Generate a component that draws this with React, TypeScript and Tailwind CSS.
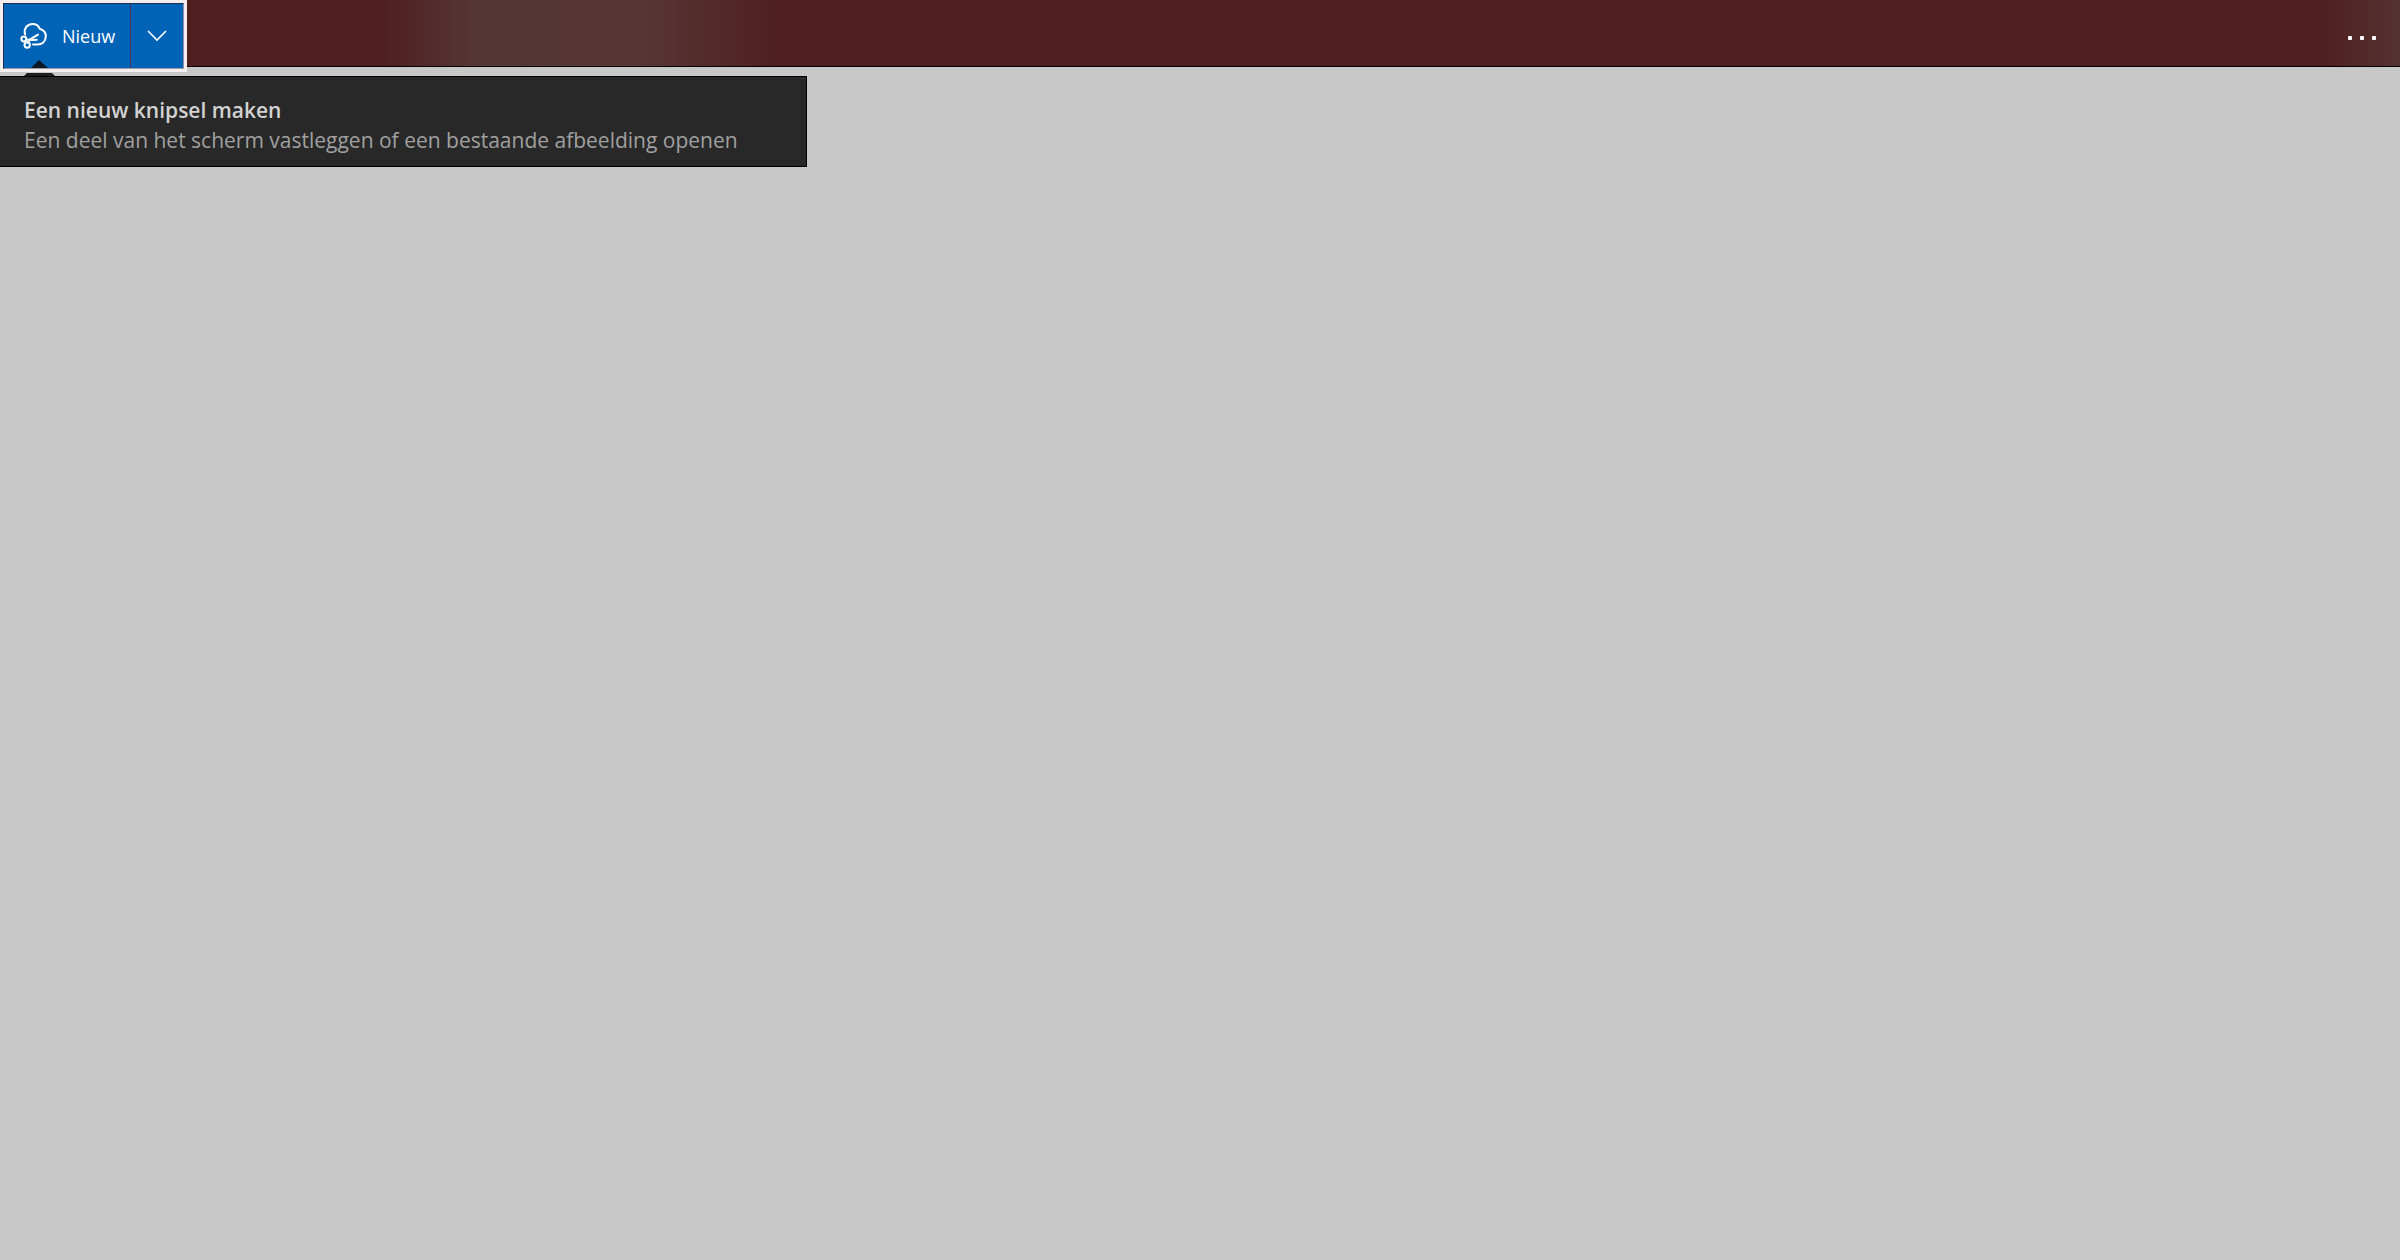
import React, { useState } from 'react';

const SnipIcon: React.FC = () => (
    <svg
        className="h-7 w-7 shrink-0"
        viewBox="0 0 28 28"
        fill="none"
        stroke="currentColor"
        strokeWidth="2"
        strokeLinecap="round"
        strokeLinejoin="round"
        aria-hidden="true"
    >
        <path d="M5.2 12.5C3.2 7 7.2 2 12.5 2C16.2 2 18.6 3.8 19.6 6.8C23.4 8 26 10.8 25.8 14.6C25.4 19.6 22 22.5 17.5 22.5H13" />
        <circle cx="3.8" cy="17" r="2.4" />
        <circle cx="7.2" cy="23" r="2.7" />
        <path d="M6 17.4L11.2 18L16.8 17.8" />
        <path d="M7.8 20.4L10 17.4L18 12.6" />
    </svg>
);

const ChevronIcon: React.FC = () => (
    <svg
        className="h-3 w-5"
        viewBox="0 0 20 12"
        fill="none"
        stroke="currentColor"
        strokeWidth="1.6"
        aria-hidden="true"
    >
        <path d="M1 1L10 10L19 1" />
    </svg>
);

const MoreIcon: React.FC = () => (
    <svg className="h-1 w-7" viewBox="0 0 28 4" fill="currentColor" aria-hidden="true">
        <rect width="4" height="4" rx="1" />
        <rect x="12" width="4" height="4" rx="1" />
        <rect x="24" width="4" height="4" rx="1" />
    </svg>
);

const App: React.FC = () => {
    const [menuOpen, setMenuOpen] = useState(false);

    return (
        <div className="min-h-screen bg-[#c8c8c8] font-['Open_Sans','Noto_Sans',sans-serif]">
            {/* Toolbar */}
            <header className="relative flex h-[67px] items-start justify-between border-b border-black bg-[#4f1f1f]">
                {/* Light showing through the title bar */}
                <div className="absolute inset-y-0 left-[380px] w-[400px] bg-[linear-gradient(to_right,transparent,#553738_25%,#573636_65%,transparent)]" />
                <div className="absolute inset-y-0 right-0 w-20 bg-linear-to-r from-transparent to-[#553232]" />

                {/* Split button */}
                <div className="relative">
                    <div className="border-3 border-[#f4eeee]">
                        <div className="flex h-[66px] border border-t-[#1b2f55] border-r-[#8f8fa8] border-b-[#9c9aa6] border-l-[#1b2f55] bg-[#0063b6] text-white">
                            <button
                                aria-describedby="new-snip-tip"
                                className="flex w-[127px] items-center gap-[14px] border-r border-[#552f58] pl-4 text-lg"
                            >
                                <SnipIcon />
                                Nieuw
                            </button>
                            <button
                                aria-label="Meer opties voor nieuw knipsel"
                                aria-expanded={menuOpen}
                                onClick={() => setMenuOpen(!menuOpen)}
                                className="flex w-[52px] items-center justify-center"
                            >
                                <ChevronIcon />
                            </button>
                        </div>
                    </div>

                    {/* Tooltip */}
                    <svg
                        className="absolute top-[60px] left-6 h-4 w-8"
                        viewBox="0 0 32 16"
                        aria-hidden="true"
                    >
                        <path d="M15 0L24 8H7Z" fill="#101923" />
                        <path d="M3 13H28L31 16H0Z" fill="#1d1d1d" />
                    </svg>
                    <div
                        id="new-snip-tip"
                        role="tooltip"
                        className="absolute top-[76px] left-0 h-[91px] w-[807px] border border-l-0 border-black bg-[#282828] pt-[18px] pl-6 text-[21px] leading-[30px] whitespace-nowrap"
                    >
                        <p className="font-semibold text-[#d2d2d2]">Een nieuw knipsel maken</p>
                        <p className="text-[#a0a0a0]">
                            Een deel van het scherm vastleggen of een bestaande afbeelding openen
                        </p>
                    </div>
                </div>

                <button
                    aria-label="Meer weergeven"
                    className="relative flex h-full w-[76px] items-center justify-center pt-[10px] text-white"
                >
                    <MoreIcon />
                </button>
            </header>
        </div>
    );
};

export default App;
